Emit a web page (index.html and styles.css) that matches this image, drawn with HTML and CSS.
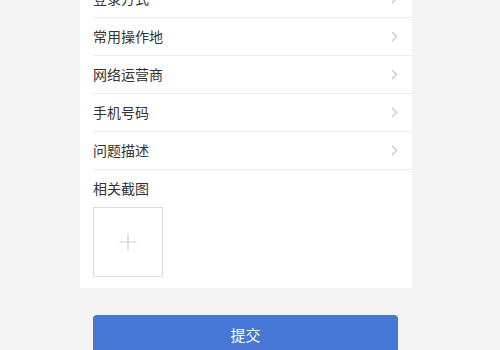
FILE: index.html
```html
<!DOCTYPE html>
<html lang="zh-CN">
<head>
<meta charset="utf-8">
<link rel="stylesheet" href="styles.css">
</head>
<body>
<div class="page">
  <div class="panel">
    <div class="row"><span class="label">登录方式</span><svg class="chev" width="7" height="11" viewBox="0 0 7 11"><polyline points="1,1 5.5,5.5 1,10" fill="none" stroke="#c4c4c4" stroke-width="1.2"/></svg></div>
    <div class="row"><span class="label">常用操作地</span><svg class="chev" width="7" height="11" viewBox="0 0 7 11"><polyline points="1,1 5.5,5.5 1,10" fill="none" stroke="#c4c4c4" stroke-width="1.2"/></svg></div>
    <div class="row"><span class="label">网络运营商</span><svg class="chev" width="7" height="11" viewBox="0 0 7 11"><polyline points="1,1 5.5,5.5 1,10" fill="none" stroke="#c4c4c4" stroke-width="1.2"/></svg></div>
    <div class="row"><span class="label">手机号码</span><svg class="chev" width="7" height="11" viewBox="0 0 7 11"><polyline points="1,1 5.5,5.5 1,10" fill="none" stroke="#c4c4c4" stroke-width="1.2"/></svg></div>
    <div class="row"><span class="label">问题描述</span><svg class="chev" width="7" height="11" viewBox="0 0 7 11"><polyline points="1,1 5.5,5.5 1,10" fill="none" stroke="#c4c4c4" stroke-width="1.2"/></svg></div>
    <div class="shots">
      <div class="shots-title">相关截图</div>
      <div class="upload">
        <svg width="20" height="20" viewBox="0 0 20 20"><path d="M10 1.5V18.5M1.5 10H18.5" stroke="#cfcfcf" stroke-width="1.2" fill="none"/></svg>
      </div>
    </div>
  </div>
  <button class="submit">提交</button>
</div>
</body>
</html>
```
FILE: styles.css
```css
html, body {
  margin: 0;
  padding: 0;
  background: #f4f4f4;
  font-family: "Noto Sans CJK SC", "Noto Sans", sans-serif;
  overflow: hidden;
}
.page {
  width: 332px;
  margin-left: 80px;
}
.panel {
  background: #fff;
  margin-top: -20px;
}
.row {
  margin-left: 13px;
  padding-right: 14px;
  height: 37px;
  border-bottom: 1px solid #ececec;
  display: flex;
  align-items: center;
  justify-content: space-between;
}
.label {
  font-size: 14px;
  color: #333;
  line-height: 20px;
  padding-bottom: 2px;
}
.chev {
  display: block;
  margin-top: -1px;
}
.shots {
  padding: 8px 13px 11px;
}
.shots-title {
  font-size: 14px;
  line-height: 20px;
  color: #333;
  margin-bottom: 9px;
}
.upload {
  width: 68px;
  height: 68px;
  border: 1px solid #dedede;
  display: flex;
  align-items: center;
  justify-content: center;
}
.upload svg { display: block; }
.submit {
  display: block;
  margin: 27px 0 0 13px;
  width: 305px;
  height: 40px;
  border: none;
  border-radius: 4px;
  background: #4677d6;
  color: #fff;
  font-family: "Noto Sans CJK SC", "Noto Sans", sans-serif;
  font-size: 15px;
  padding: 0 0 2px;
}
```
